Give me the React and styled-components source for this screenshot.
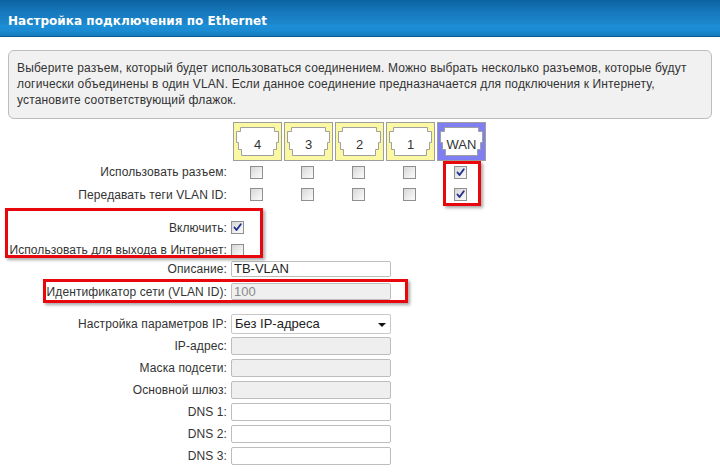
import React from 'react'
import styled, { createGlobalStyle } from 'styled-components'

const GlobalStyle = createGlobalStyle`
  html, body {
    margin: 0;
    padding: 0;
    background: #fff;
  }
  body {
    font-family: "Liberation Sans", Arial, sans-serif;
    font-size: 12px;
    color: #333;
  }
`

const ports = ['4', '3', '2', '1', 'WAN']

// which ports are on for "use port" and "vlan tags"
const usePort = [false, false, false, false, true]
const vlanTags = [false, false, false, false, true]

const ipRows = [
  { label: 'IP-адрес:', disabled: true },
  { label: 'Маска подсети:', disabled: true },
  { label: 'Основной шлюз:', disabled: true },
  { label: 'DNS 1:' },
  { label: 'DNS 2:' },
  { label: 'DNS 3:' },
]

const PortIcon = ({ name }) => {
  const wan = name === 'WAN'
  return (
    <Port $wan={wan}>
      <svg width="49" height="39" viewBox="0 0 49 39">
        <path
          d="M3.5 9.5 H7.5 V5.5 H41.5 V9.5 H45.5 V20.5 H43.5 V27.5 H40.5 V33.5 H8.5 V27.5 H5.5 V20.5 H3.5 Z"
          fill="#fff"
          stroke="#a0a0a0"
          strokeWidth="1"
        />
      </svg>
      <PortName>{name}</PortName>
    </Port>
  )
}

const Check = ({ checked }) => (
  <Box>
    {checked ? (
      <svg width="11" height="11" viewBox="0 0 11 11">
        <path d="M2.5 5.5 L4.5 8 L8.8 2.2" fill="none" stroke="#22328c" strokeWidth="1.9" strokeLinecap="round" strokeLinejoin="round" />
      </svg>
    ) : null}
  </Box>
)

const App = () => {
  return (
    <>
      <GlobalStyle />
      <Page>
        <Header>
          <Title>Настройка подключения по Ethernet</Title>
        </Header>

        <Info>
          Выберите разъем, который будет использоваться соединением. Можно выбрать несколько разъемов, которые будут<br />
          логически объединены в один VLAN. Если данное соединение предназначается для подключения к Интернету,<br />
          установите соответствующий флажок.
        </Info>

        <Form>
          <PortRow>
            <span />
            <Cells>
              {ports.map((p) => <PortIcon key={p} name={p} />)}
            </Cells>
          </PortRow>
          <Row $h={22}>
            <Label>Использовать разъем:</Label>
            <Cells>
              {usePort.map((c, i) => <Cell key={i}><Check checked={c} /></Cell>)}
            </Cells>
          </Row>
          <Row $h={23}>
            <Label>Передавать теги VLAN ID:</Label>
            <Cells>
              {vlanTags.map((c, i) => <Cell key={i}><Check checked={c} /></Cell>)}
            </Cells>
          </Row>

          <Row $h={23} $mt={10}>
            <Label>Включить:</Label>
            <Check checked />
          </Row>
          <Row $h={22}>
            <Label>Использовать для выхода в Интернет:</Label>
            <Check />
          </Row>
          <Row $h={16}>
            <Label>Описание:</Label>
            <Input $h={16}>TB-VLAN</Input>
          </Row>
          <Row $h={17} $mt={6}>
            <Label>Идентификатор сети (VLAN ID):</Label>
            <Input $h={17} $disabled>100</Input>
          </Row>

          <Row $h={20} $mt={14}>
            <Label>Настройка параметров IP:</Label>
            <Select>Без IP-адреса<Arrow /></Select>
          </Row>
          {ipRows.map((r, i) => (
            <Row key={r.label} $h={18} $mt={i === 0 ? 3 : 4}>
              <Label>{r.label}</Label>
              <Input $h={18} $disabled={r.disabled} />
            </Row>
          ))}
        </Form>

        {/* red marks over the important settings */}
        <Mark style={{ left: 443, top: 161, width: 38, height: 45 }} />
        <Mark style={{ left: 5, top: 208, width: 258, height: 50 }} />
        <Mark style={{ left: 43, top: 279, width: 365, height: 24 }} />
      </Page>
    </>
  )
}

const Page = styled.div`
  position: relative;
  width: 720px;
  height: 472px;
  overflow: hidden;
`

const Header = styled.div`
  height: 36px;
  border-bottom: 1px solid #0b5d92;
  background: linear-gradient(
    to bottom,
    #0c62a0 0px,
    #1678bd 12px,
    #1d87cc 24px,
    #1c8fd6 25px,
    #1b8bd2 31px,
    #1579bb 36px
  );
  display: flex;
  align-items: center;
  padding: 0 8px;
`

const Title = styled.h1`
  margin: 6px 0 0;
  font-family: "DejaVu Sans", Verdana, sans-serif;
  font-weight: bold;
  font-size: 12px;
  color: #fff;
  letter-spacing: 0.05px;
`

const Info = styled.div`
  margin: 13px 8px 0;
  padding: 9px 8px 8px;
  height: 50px;
  border: 1px solid #bcbcbc;
  border-radius: 6px;
  background: #f1f1f1;
  line-height: 16px;
  letter-spacing: 0.15px;
  color: #333;
  white-space: nowrap;
`

const Form = styled.div`
  display: flex;
  flex-direction: column;
  margin-top: 3px;
`

const Row = styled.div`
  display: grid;
  grid-template-columns: 227px auto;
  column-gap: 4px;
  align-items: center;
  height: ${({ $h }) => $h}px;
  margin-top: ${({ $mt }) => $mt || 0}px;
`

const PortRow = styled(Row)`
  height: 39px;
  column-gap: 5px;
`

const Label = styled.label`
  text-align: right;
  white-space: nowrap;
  letter-spacing: 0.1px;
  color: #333;
`

const Cells = styled.div`
  display: flex;
  gap: 2px;
  margin-left: 1px;
`

const Cell = styled.div`
  width: 49px;
  display: flex;
  justify-content: center;
`

const Port = styled.div`
  position: relative;
  width: 49px;
  height: 39px;
  box-sizing: border-box;
  border: 1px solid #9e9e9e;
  background: ${({ $wan }) => ($wan ? '#7f7ff2' : '#fbf8a3')};
  svg {
    position: absolute;
    left: -1px;
    top: -1px;
  }
`

const PortName = styled.span`
  position: absolute;
  left: 0;
  right: 0;
  top: 14px;
  text-align: center;
  font-size: 13px;
  color: #333;
`

const Box = styled.span`
  display: inline-flex;
  align-items: center;
  justify-content: center;
  width: 13px;
  height: 13px;
  box-sizing: border-box;
  border: 1px solid #8f8f8f;
  background: linear-gradient(135deg, #d6d6d6 0%, #ececec 55%, #fafafa 100%);
`

const Input = styled.div`
  width: 160px;
  height: ${({ $h }) => $h}px;
  box-sizing: border-box;
  border: 1px solid #bdbdbd;
  border-radius: 2px;
  background: ${({ $disabled }) => ($disabled ? '#efefef' : '#fff')};
  color: ${({ $disabled }) => ($disabled ? '#8a8a8a' : '#222')};
  padding: 0 2px;
  font-size: 13px;
  line-height: ${({ $h }) => $h - 2}px;
`

const Select = styled.div`
  position: relative;
  width: 160px;
  height: 20px;
  box-sizing: border-box;
  border: 1px solid #c8c8c8;
  border-radius: 2px;
  background: #fff;
  color: #222;
  padding: 0 3px;
  font-size: 13px;
  line-height: 18px;
`

const Arrow = styled.span`
  position: absolute;
  right: 4px;
  top: 8px;
  border-left: 4px solid transparent;
  border-right: 4px solid transparent;
  border-top: 4px solid #111;
`

const Mark = styled.div`
  position: absolute;
  box-sizing: border-box;
  border: 3px solid #e8070d;
  box-shadow: 2px 2px 3px rgba(0, 0, 0, 0.35);
  pointer-events: none;
`

export default App
